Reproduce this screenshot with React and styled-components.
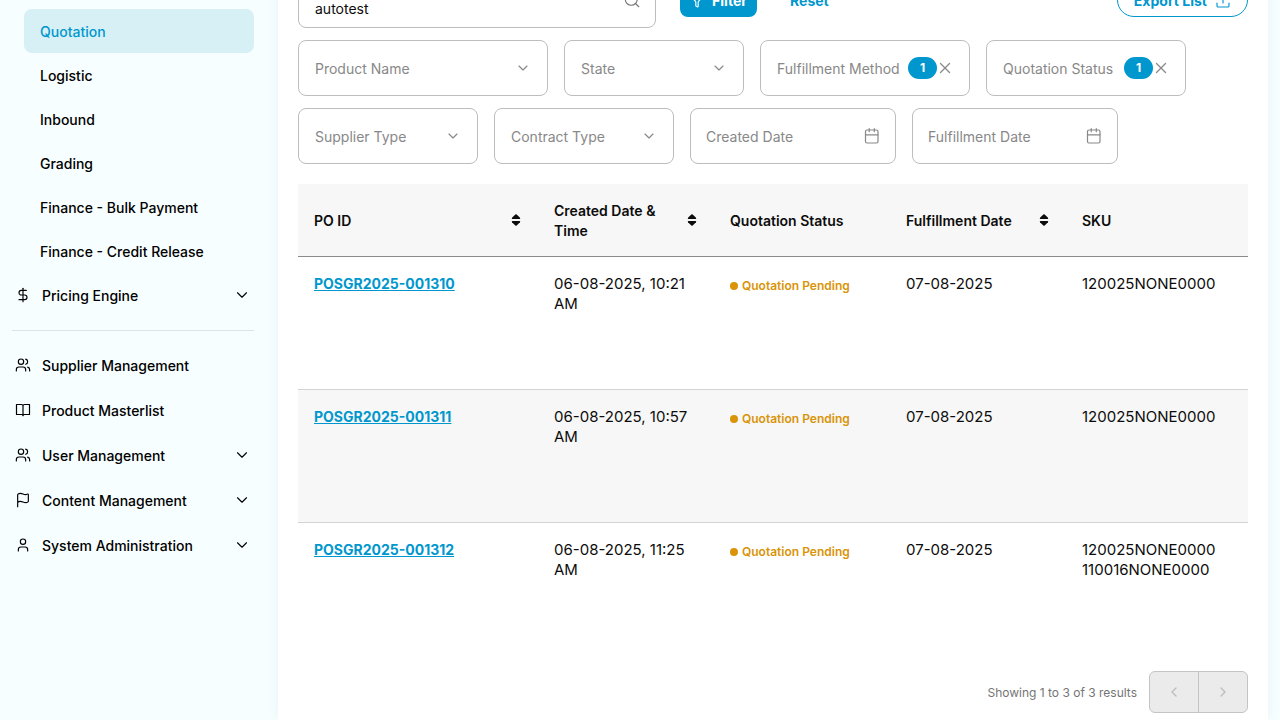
import React from "react";
import styled, { createGlobalStyle, css } from "styled-components";
import {
  ChevronDown,
  ChevronLeft,
  ChevronRight,
  DollarSign,
  Filter,
  Flag,
  Search,
  Upload,
  User,
  Users,
} from "lucide-react";

const GlobalStyle = createGlobalStyle`
  *, *::before, *::after { box-sizing: border-box; }
  body {
    margin: 0;
    background: #f7feff;
    color: #0c0c0c;
    font: 400 14px/20px Inter, "Liberation Sans", sans-serif;
  }
  button, input, select { font: inherit; color: inherit; margin: 0; }
  a { color: inherit; }
`;

const Shell = styled.div`
  display: flex;
  height: 100vh;
  overflow: hidden;
`;

const Sidebar = styled.nav`
  flex: 0 0 278px;
  padding: 9px 24px 0 12px;
  color: #000;
  font-weight: 500;
`;

const SubList = styled.ul`
  list-style: none;
  margin: 0;
  padding: 0 0 0 12px;
`;

const SubLink = styled.a`
  display: flex;
  align-items: center;
  height: 44px;
  padding: 2px 16px 0;
  border-radius: 8px;
  text-decoration: none;
  ${({ $active }) => $active && css`
    background: #d6f0f5;
    color: #0097ce;
  `}
`;

const NavRow = styled.a`
  display: flex;
  align-items: center;
  gap: 11px;
  width: 100%;
  height: ${({ $compact }) => ($compact ? 44 : 45)}px;
  padding: 0 3px;
  border: 0;
  background: none;
  text-align: left;
  text-decoration: none;
  font-weight: 500;
  cursor: pointer;
  svg { flex: none; }
`;

const NavLabel = styled.span`
  flex: 1;
  padding-top: 2px;
`;

const Divider = styled.hr`
  height: 1px;
  margin: 13px 0 11px;
  border: 0;
  background: #dfe3e6;
`;

const Card = styled.main`
  flex: 1;
  min-width: 0;
  margin: -48px 12px 0 0;
  padding: 20px;
  background: #fff;
  box-shadow: 0 0 12px rgba(0, 90, 130, 0.07);
`;

const Toolbar = styled.div`
  display: flex;
  align-items: center;
  margin-bottom: 12px;
`;

const SearchBox = styled.div`
  display: flex;
  align-items: center;
  width: 358px;
  height: 56px;
  padding: 0 14px 0 16px;
  border: 1px solid #bdbdbd;
  border-radius: 8px;
  color: #757575;
`;

const SearchInput = styled.input`
  flex: 1;
  min-width: 0;
  height: 54px;
  padding: 16px 0 0;
  border: 0;
  outline: 0;
  background: none;
  color: #0c0c0c;
`;

const Button = styled.button`
  display: flex;
  align-items: center;
  justify-content: center;
  gap: 8px;
  height: 34px;
  padding: 2px 10px 0;
  border: 0;
  border-radius: 8px;
  background: none;
  color: #0097ce;
  font-weight: 700;
`;

const FilterButton = styled(Button)`
  margin: 0 23px 0 24px;
  background: #0097ce;
  color: #fff;
`;

const ExportButton = styled(Button)`
  margin-left: auto;
  padding: 2px 16px 0;
  border: 1px solid #0097ce;
  border-radius: 17px;
`;

const FilterRow = styled.div`
  display: flex;
  gap: 16px;
  margin-bottom: ${({ $last }) => ($last ? 20 : 12)}px;
`;

const Field = styled.div`
  display: flex;
  align-items: center;
  width: ${({ $width }) => $width}px;
  height: 56px;
  padding: 0 16px;
  border: 1px solid #bdbdbd;
  border-radius: 8px;
  color: #888;
  svg { flex: none; }
`;

const Select = styled.select`
  flex: 1;
  min-width: 0;
  height: 54px;
  padding: 2px 0 0;
  appearance: none;
  border: 0;
  outline: 0;
  background: none;
`;

const DateInput = styled.input`
  flex: 1;
  min-width: 0;
  padding: 2px 0 0;
  border: 0;
  outline: 0;
  background: none;
  &::placeholder { color: #888; opacity: 1; }
`;

const DateBox = styled(Field)`
  padding: 0 16px 0 15px;
`;

const Count = styled.span`
  width: 29px;
  border-radius: 11px;
  background: #0097ce;
  color: #fff;
  font-size: 12px;
  line-height: 22px;
  font-weight: 700;
  text-align: center;
`;

const ClearButton = styled.button`
  display: flex;
  padding: 0;
  border: 0;
  background: none;
`;

const Table = styled.table`
  width: 100%;
  table-layout: fixed;
  border-collapse: separate;
  border-spacing: 0;
`;

const Th = styled.th`
  width: ${({ $width }) => ($width ? `${$width}px` : "auto")};
  height: 73px;
  padding: 0 16px;
  border-bottom: 1px solid #8a8a8a;
  background: #f7f7f7;
  text-align: left;
  font-weight: 600;
`;

const HeadContent = styled.div`
  display: flex;
  align-items: center;
  justify-content: space-between;
  svg { flex: none; }
`;

const HeadLabel = styled.span`
  padding-top: 2px;
`;

const Row = styled.tr`
  background: ${({ $shaded }) => ($shaded ? "#f7f7f7" : "#fff")};
`;

const Td = styled.td`
  height: 133px;
  padding: 17px 16px 16px;
  border-bottom: 1px solid #d4d4d4;
  vertical-align: top;
  font-size: 15px;
  ${Row}:last-child & { border-bottom-color: transparent; }
`;

const OrderLink = styled.a`
  color: #0097ce;
  font-size: 14px;
  font-weight: 700;
  text-decoration: underline;
`;

const Status = styled.span`
  display: flex;
  align-items: center;
  gap: 4px;
  padding-top: 2px;
  color: #d99408;
  font-size: 12px;
  font-weight: 600;
  white-space: nowrap;
  &::before {
    content: "";
    width: 8px;
    height: 8px;
    border-radius: 50%;
    background: currentColor;
  }
`;

const Footer = styled.footer`
  display: flex;
  align-items: center;
  justify-content: flex-end;
  gap: 12px;
  margin-top: 15px;
  color: #757575;
  font-size: 12px;
`;

const Summary = styled.span`
  padding-top: 2px;
`;

const Pager = styled.div`
  display: flex;
  border: 1px solid #c4c4c4;
  border-radius: 6px;
  background: #ebebeb;
  overflow: hidden;
`;

const PageButton = styled.button`
  display: flex;
  align-items: center;
  justify-content: center;
  width: 48px;
  height: 40px;
  padding: 0;
  border: 0;
  background: none;
  color: #bdbdbd;
  & + & { width: 49px; border-left: 1px solid #c4c4c4; }
`;

const SortIcon = () => (
  <svg width="12" height="12" viewBox="-1 0 12 12" fill="currentColor" aria-hidden="true">
    <path d="M4.3 0.5Q5 -0.1 5.7 0.5L9 3.8Q9.6 5 8.4 5H1.6Q0.4 5 1 3.8Z" />
    <path d="M4.3 11.5Q5 12.1 5.7 11.5L9 8.2Q9.6 7 8.4 7H1.6Q0.4 7 1 8.2Z" />
  </svg>
);

const CalendarIcon = () => (
  <svg width="15" height="16" viewBox="0 0 15 16" fill="none" stroke="currentColor" strokeWidth="1.2" strokeLinecap="round" aria-hidden="true">
    <rect x="1.5" y="2" width="12.5" height="13" rx="1.5" />
    <path d="M1.5 6.8H14M5.2 0.7V3.7M10.3 0.7V3.7" />
  </svg>
);

const CloseIcon = () => (
  <svg width="16" height="16" viewBox="0 0 16 16" fill="none" stroke="currentColor" strokeWidth="1.3" strokeLinecap="round" aria-hidden="true">
    <path d="M3.5 3.5 12.5 12.5M12.5 3.5 3.5 12.5" />
  </svg>
);

const BookIcon = () => (
  <svg width="16" height="16" viewBox="0 0 16 16" fill="none" stroke="currentColor" strokeWidth="1.2" strokeLinejoin="round" aria-hidden="true">
    <path d="M8 4Q8 2.5 6.5 2.5H1.5V12.5H6.5Q8 12.5 8 13.7Q8 12.5 9.5 12.5H14.5V2.5H9.5Q8 2.5 8 4V13.7" />
  </svg>
);

const subItems = ["Quotation", "Logistic", "Inbound", "Grading", "Finance - Bulk Payment", "Finance - Credit Release"];

const navItems = [
  { label: "Supplier Management", Icon: Users },
  { label: "Product Masterlist", Icon: BookIcon },
  { label: "User Management", Icon: Users, group: true },
  { label: "Content Management", Icon: Flag, group: true },
  { label: "System Administration", Icon: User, group: true },
];

const columns = [
  { label: "PO ID", width: 240, sortable: true },
  { label: "Created Date & Time", width: 176, sortable: true },
  { label: "Quotation Status", width: 176 },
  { label: "Fulfillment Date", width: 176, sortable: true },
  { label: "SKU" },
];

const orders = [
  { id: "POSGR2025-001310", created: "06-08-2025, 10:21 AM", date: "07-08-2025", skus: ["120025NONE0000"] },
  { id: "POSGR2025-001311", created: "06-08-2025, 10:57 AM", date: "07-08-2025", skus: ["120025NONE0000"] },
  { id: "POSGR2025-001312", created: "06-08-2025, 11:25 AM", date: "07-08-2025", skus: ["120025NONE0000", "110016NONE0000"] },
];

function NavItem({ label, Icon, group, compact }) {
  const action = group ? { as: "button", type: "button" } : { href: "#" };
  return (
    <NavRow $compact={compact} {...action}>
      <Icon size={16} strokeWidth={1.75} />
      <NavLabel>{label}</NavLabel>
      {group && <ChevronDown size={18} strokeWidth={1.5} />}
    </NavRow>
  );
}

function SelectField({ label, width, count }) {
  return (
    <Field $width={width}>
      <Select aria-label={label} defaultValue="">
        <option value="">{label}</option>
      </Select>
      {count ? (
        <>
          <Count>{count}</Count>
          <ClearButton type="button" aria-label={`Clear ${label}`}>
            <CloseIcon />
          </ClearButton>
        </>
      ) : (
        <ChevronDown size={16} strokeWidth={1.75} />
      )}
    </Field>
  );
}

function DateField({ label }) {
  return (
    <DateBox $width={206}>
      <DateInput type="text" aria-label={label} placeholder={label} />
      <CalendarIcon />
    </DateBox>
  );
}

export default function App() {
  return (
    <>
      <GlobalStyle />
      <Shell>
        <Sidebar>
          <SubList>
            {subItems.map((item, i) => (
              <li key={item}>
                <SubLink href="#" $active={i === 0}>{item}</SubLink>
              </li>
            ))}
          </SubList>
          <NavItem label="Pricing Engine" Icon={DollarSign} group compact />
          <Divider />
          {navItems.map((item) => <NavItem key={item.label} {...item} />)}
        </Sidebar>
        <Card>
          <Toolbar>
            <SearchBox>
              <SearchInput type="text" aria-label="Search" defaultValue="autotest" />
              <Search size={18} strokeWidth={1.5} />
            </SearchBox>
            <FilterButton type="button"><Filter size={14} />Filter</FilterButton>
            <Button type="button">Reset</Button>
            <ExportButton type="button">Export List<Upload size={16} strokeWidth={1.75} /></ExportButton>
          </Toolbar>
          <FilterRow>
            <SelectField label="Product Name" width={250} />
            <SelectField label="State" width={180} />
            <SelectField label="Fulfillment Method" width={210} count={1} />
            <SelectField label="Quotation Status" width={200} count={1} />
          </FilterRow>
          <FilterRow $last>
            <SelectField label="Supplier Type" width={180} />
            <SelectField label="Contract Type" width={180} />
            <DateField label="Created Date" />
            <DateField label="Fulfillment Date" />
          </FilterRow>
          <Table>
            <thead>
              <tr>
                {columns.map((col) => (
                  <Th key={col.label} $width={col.width}>
                    <HeadContent>
                      <HeadLabel>{col.label}</HeadLabel>
                      {col.sortable && <SortIcon />}
                    </HeadContent>
                  </Th>
                ))}
              </tr>
            </thead>
            <tbody>
              {orders.map((order, i) => (
                <Row key={order.id} $shaded={i % 2 === 1}>
                  <Td><OrderLink href="#">{order.id}</OrderLink></Td>
                  <Td>{order.created}</Td>
                  <Td><Status>Quotation Pending</Status></Td>
                  <Td>{order.date}</Td>
                  <Td>{order.skus.map((sku) => <div key={sku}>{sku}</div>)}</Td>
                </Row>
              ))}
            </tbody>
          </Table>
          <Footer>
            <Summary>Showing 1 to 3 of 3 results</Summary>
            <Pager>
              <PageButton type="button" aria-label="Previous page" disabled><ChevronLeft size={16} /></PageButton>
              <PageButton type="button" aria-label="Next page" disabled><ChevronRight size={16} /></PageButton>
            </Pager>
          </Footer>
        </Card>
      </Shell>
    </>
  );
}
